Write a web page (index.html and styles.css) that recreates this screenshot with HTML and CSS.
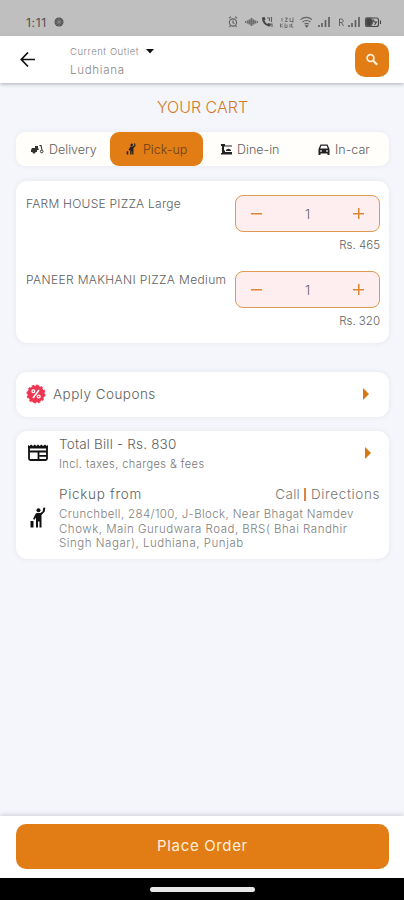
FILE: index.html
```html
<!DOCTYPE html>
<html lang="en">
<head>
<meta charset="utf-8">
<title>Your Cart</title>
<link rel="stylesheet" href="styles.css">
</head>
<body>
<div class="status">
  <span class="clock">1:11</span>
  <svg class="globe" width="10" height="10" viewBox="0 0 10 10"><circle cx="5" cy="5" r="4.5" fill="#555"/><path d="M1.5 5h7M5 1v8M2.5 2.5l5 5M7.5 2.5l-5 5" stroke="#999" stroke-width=".6"/></svg>
  <svg class="indicators" width="154" height="14" viewBox="0 0 154 14" fill="none" stroke="#606060" stroke-width="1.1">
    <circle cx="5" cy="7.5" r="3.6"/><path d="M1 3.2l2-1.6M9 3.2L7 1.6M5 5.5v2.3l1.5.6M2.3 10.8l-1 1.2M7.7 10.8l1 1.2"/>
    <path d="M17 7h1M19.500 5.500v3M21.500 4.500v5M23.500 3v8M25.500 4.500v5M27.500 5.500v3M29 7h1" stroke="#6c6c6c" stroke-width="1.800"/>
    <path d="M34 2.500c0 5 3 8.500 8 9l1-2-2.500-1.400-1.200 1C37.700 8.200 37 7 36.500 5.500l1-1.200L36.500 2z" fill="#444" stroke="none"/><path d="M39 3h2.500v3M43.500 2v5M41 9h3v3"/>
    <path d="M54 3v3.500M57 3h2.500l-2.300 3.500h2.500M62 3v3.500h3M65 2.500v5M52.500 8.500v4M55 8.500l-2 2 2 2M57 8.500v4h2v-3M62 9v3.500M64.500 9h-1v3h2" stroke="#666" stroke-width=".9"/>
    <path d="M72.500 4.600c3.500-2.700 8-2.700 11.500 0M74.500 7c2.500-1.900 5.500-1.900 8 0M76.500 9.200c1.200-1 3-1 4.200 0" /><path d="M78.700 12.500l-1.500-2h3z" fill="#555" stroke-width=".6"/>
    <path d="M91 12v-2M94 12V8M97.500 12V5M101 12V2" stroke-width="1.700"/>
    <path d="M111.500 11V4h2c2.300 0 2.300 3.500 0 3.500h-2M113.500 7.500l2 3.500" stroke-width="1"/>
    <path d="M121 12v-2M124 12V8M127.500 12V5M131 12V2" stroke-width="1.700"/>
    <rect x="137.500" y="3" width="13" height="8.500" rx="2" stroke="#444"/><path d="M138 3h5l2 4-2 4h-5z" fill="#444"/><path d="M152.500 5.500v3.500M145 4.500l1.500 2.500h2l-2 3" stroke="#444"/>
  </svg>
</div>
<header class="topbar">
  <svg class="back" width="16" height="16" viewBox="0 0 16 16" fill="none" stroke="#111" stroke-width="1.700"><path d="M15 7.500H1.500M8 .5L1.300 7.500 8 14.500"/></svg>
  <div class="outlet">
    <div class="outlet-label"><span class="t-current">Current Outlet</span><svg width="8" height="5" viewBox="0 0 8 5"><path d="M0 0h8L4 4.500z" fill="#111"/></svg></div>
    <div class="t-city">Ludhiana</div>
  </div>
  <div class="search"><svg width="14" height="14" viewBox="0 0 14 14" fill="none" stroke="#fff1dc"><circle cx="5.500" cy="5" r="3.400" stroke-width="1.700"/><path d="M8 7.500l4.200 4.200" stroke-width="2.200"/></svg></div>
</header>
<main>
  <h1><span class="t-title">YOUR CART</span></h1>
  <nav class="tabs">
    <div class="tab delivery"><svg width="13" height="11" viewBox="0 0 13 11" fill="#333"><path d="M1 4h3V2h3v2l1 2H6v2H0V6zM8.500 1h2l1 5h-1L9.500 2h-1z"/><circle cx="3" cy="8" r="1.600"/><circle cx="10.700" cy="7.500" r="1.300" fill="none" stroke="#333"/></svg><span class="t-delivery">Delivery</span></div>
    <div class="tab pickup active"><svg width="10" height="12" viewBox="0 0 18 22" fill="#222"><path d="M8.300 1.200h4v4.300h-4zM14.500 1l2-.5.8 5-3.800 3.500V21h-2.400v-6H10v6H7.500v-8.500L5.800 14l-1.200-1.500L8 6.500h4.300l2.700-2zM1 15h3v6H1z"/></svg><span class="t-pickup">Pick-up</span></div>
    <div class="tab dinein"><svg width="11" height="11" viewBox="0 0 11 11" fill="#222"><path d="M0 0h4v1.500h7v1H3v4h1v1.500h7v2.500H0V9h1V2H0zM5 7c0-3 5-3 5 0z"/></svg><span class="t-dine">Dine-in</span></div>
    <div class="tab incar"><svg width="12" height="11" viewBox="0 0 12 11"><path d="M2.500.5h7L11.500 5v6h-2V9.500h-7V11h-2V5zM3.300 1.700L2.200 4.500h7.600L8.700 1.700z" fill="#222" fill-rule="evenodd"/><circle cx="3" cy="7" r=".9" fill="#ddd"/><circle cx="9" cy="7" r=".9" fill="#ddd"/></svg><span class="t-car">In-car</span></div>
  </nav>
  <section class="card items">
    <div class="item">
      <div class="name t-farm">FARM HOUSE PIZZA Large</div>
      <div class="side">
        <div class="stepper"><i class="minus"></i><span>1</span><i class="plus"></i></div>
        <div class="price">Rs. 465</div>
      </div>
    </div>
    <div class="item">
      <div class="name t-paneer">PANEER MAKHANI PIZZA Medium</div>
      <div class="side">
        <div class="stepper"><i class="minus"></i><span>1</span><i class="plus"></i></div>
        <div class="price">Rs. 320</div>
      </div>
    </div>
  </section>
  <section class="card coupons">
    <svg width="20" height="20" viewBox="0 0 20 20"><circle cx="10" cy="10" r="8.600" fill="#ee3650"/><circle cx="10" cy="10" r="8.700" fill="none" stroke="#ee3650" stroke-width="1.600" stroke-dasharray="2.500 2.055"/><path d="M13 6l-6 8" stroke="#fff" stroke-width="1.500"/><circle cx="7.300" cy="7.300" r="1.400" fill="none" stroke="#fff" stroke-width="1.300"/><circle cx="12.700" cy="12.500" r="1.400" fill="none" stroke="#fff" stroke-width="1.300"/></svg>
    <span class="t-apply">Apply Coupons</span>
    <i class="chevron"></i>
  </section>
  <section class="card bill">
    <div class="row total">
      <svg width="20" height="17" viewBox="0 0 20 17" fill="none" stroke="#111" stroke-width="1.800"><path d="M1 2.500v12q0 1.500 1.500 1.500h15q1.500 0 1.500-1.500v-12M1 7.500h18M11.500 11.800H19M10.500 7v9"/><path d="M0 4.500V1l1.500 1L3 .5 5 2 6.700.5 8.400 2 10 .5 11.700 2 13.400.5 15 2 17 .5 18.500 2 20 1v3.500z" fill="#111" stroke="none"/></svg>
      <div class="lines"><div class="t-total">Total Bill - Rs. 830</div><div class="t-incl">Incl. taxes, charges &amp; fees</div></div>
      <i class="chevron"></i>
    </div>
    <div class="row place">
      <svg width="16" height="21" viewBox="0 0 16 21" fill="#111"><circle cx="8.500" cy="3.300" r="2"/><path d="M13 2l.6-1.500 1.700.3-.5 3.700-3.300 3.500v12.500h-2v-6H8v6H6V10.500l-1.500 2.300L3 12l2.500-5Q6 6 7.200 6h3.300l2.300-1.800zM.5 14h3v6.500h-3z"/></svg>
      <div class="lines">
        <div class="place-head"><span class="t-from">Pickup from</span><span class="links"><span class="t-call">Call</span><i class="bar"></i><span class="t-dir">Directions</span></span></div>
        <div class="address"><div class="t-a1">Crunchbell, 284/100, J-Block, Near Bhagat Namdev</div><div class="t-a2">Chowk, Main Gurudwara Road, BRS( Bhai Randhir</div><div class="t-a3">Singh Nagar), Ludhiana, Punjab</div></div>
      </div>
    </div>
  </section>
</main>
<footer><button class="order"><span class="t-order">Place Order</span></button></footer>
<div class="gesture"><i></i></div>
</body>
</html>
```
FILE: styles.css
```css
* { box-sizing: border-box; }
body { margin: 0; width: 404px; height: 900px; display: flex; flex-direction: column; background: #f4f6fb; font-family: Inter, "Open Sans", sans-serif; font-weight: 300; color: #606060; overflow: hidden; }
svg { display: block; flex: none; }
span, .name, .price, .lines div { white-space: nowrap; }
.status { height: 36px; flex: none; background: #bfbfbf; display: flex; align-items: center; padding: 8px 22px 0 26px; }
.clock { font-size: 12px; font-weight: 400; color: #505050; width: 28px; letter-spacing: .7px; }
.indicators { margin-left: auto; }
.topbar { height: 47px; flex: none; background: #fff; display: flex; align-items: center; padding: 0 15px 0 20px; box-shadow: 0 1px 4px #aaadb5; z-index: 1; }
.outlet { margin-left: 34px; padding-top: 4px; color: #888; }
.outlet-label { display: flex; align-items: center; gap: 7px; height: 16px; font-size: 9.500px; }
.t-current { letter-spacing: .5px; }
.t-city { font-size: 11.500px; line-height: 20px; letter-spacing: .7px; }
.search { margin-left: auto; width: 34px; height: 34px; border-radius: 10px; background: #e27d16; display: grid; place-items: center; }
main { flex: 1; padding: 0 15px 0 16px; }
h1 { margin: 14px 0 0; height: 20px; font-size: 16px; font-weight: 300; line-height: 20px; text-align: center; color: #d77925; }
.tabs { margin-top: 15px; height: 34px; display: flex; background: #fffefb; border-radius: 9px; box-shadow: 0 0 5px #e6e8ee; font-size: 12.500px; }
.tab { display: flex; align-items: center; gap: 5px; flex: 93px 0 0; padding-left: 16px; }
.tab.delivery { flex-basis: 94px; padding-left: 15px; }
.tab.active { background: #e27d16; border-radius: 9px; gap: 7px; color: #694019; }
.tab.dinein { padding-left: 18px; gap: 5px; }
.tab.incar { padding-left: 22px; }
.card { background: #fff; border-radius: 11px; box-shadow: 0 0 5px #e3e5ec; }
.items { margin-top: 15px; height: 162px; padding: 14px 9px 0 10px; }
.item { height: 76px; display: flex; justify-content: space-between; }
.name { font-size: 12px; line-height: 18px; width: 0; }
.t-farm { letter-spacing: .25px; }
.t-paneer { letter-spacing: .36px; }
.side { width: 145px; }
.stepper { height: 37px; border: 1px solid #e09a55; border-radius: 8px; background: #feeeef; display: flex; align-items: center; justify-content: space-between; padding: 0 15px; font-size: 13px; }
.minus, .plus { width: 11px; height: 11px; background: linear-gradient(#dd8735, #dd8735) center / 11px 1.500px no-repeat; }
.plus { background: linear-gradient(#dd8735, #dd8735) center / 11px 1.500px no-repeat, linear-gradient(#dd8735, #dd8735) center / 1.500px 11px no-repeat; }
.price { font-size: 11.500px; line-height: 16px; margin-top: 5px; text-align: right; }
.coupons { margin-top: 29px; height: 45px; display: flex; align-items: center; padding: 0 20px 1px 10px; font-size: 13.500px; }
.coupons .chevron { margin-left: auto; }
.coupons span { margin-left: 7px; letter-spacing: .47px; }
.chevron { width: 6px; height: 12px; background: #d97713; clip-path: polygon(0 0, 100% 50%, 0 100%); }
.bill { margin-top: 14px; height: 128px; padding: 3px 9px 0 12px; }
.row { display: flex; }
.row .lines { flex: 1; }
.total { height: 51px; }
.total svg { margin: 10px 11px 0 0; }
.total .chevron { margin: 13px 9px 0 0; }
.t-total { font-size: 13.500px; line-height: 20px; letter-spacing: .18px; }
.t-incl { font-size: 11px; line-height: 20px; letter-spacing: .44px; color: #777; }
.place svg { margin: 22px 12px 0 2px; padding: 0; }
.place .lines { margin-left: 1px; }
.place-head { display: flex; justify-content: space-between; font-size: 13.500px; line-height: 18px; }
.t-from { letter-spacing: .7px; }
.links { display: flex; align-items: center; color: #777; }
.t-call { letter-spacing: .3px; }
.t-dir { letter-spacing: .6px; }
.bar { width: 2px; height: 13px; background: #dc8442; margin: 0 5px 0 4px; }
.address { padding-top: 4px; font-size: 11.500px; line-height: 14.500px; color: #808080; }
.t-a1 { letter-spacing: .37px; }
.t-a2 { letter-spacing: .5px; }
.t-a3 { letter-spacing: .53px; }
footer { height: 62px; flex: none; background: #fff; padding: 8px 15px 0 16px; box-shadow: 0 -1px 5px #ccced6; }
.order { display: block; width: 100%; height: 45px; border: 0; padding: 0 0 2px; border-radius: 10px; background: #e27d16; color: #fff0dd; font: 400 15px Inter, sans-serif; letter-spacing: .65px; }
.gesture { height: 22px; flex: none; background: #000; display: grid; place-items: center; }
.gesture i { width: 105px; height: 5px; border-radius: 3px; background: #e8e8e8; }
```
